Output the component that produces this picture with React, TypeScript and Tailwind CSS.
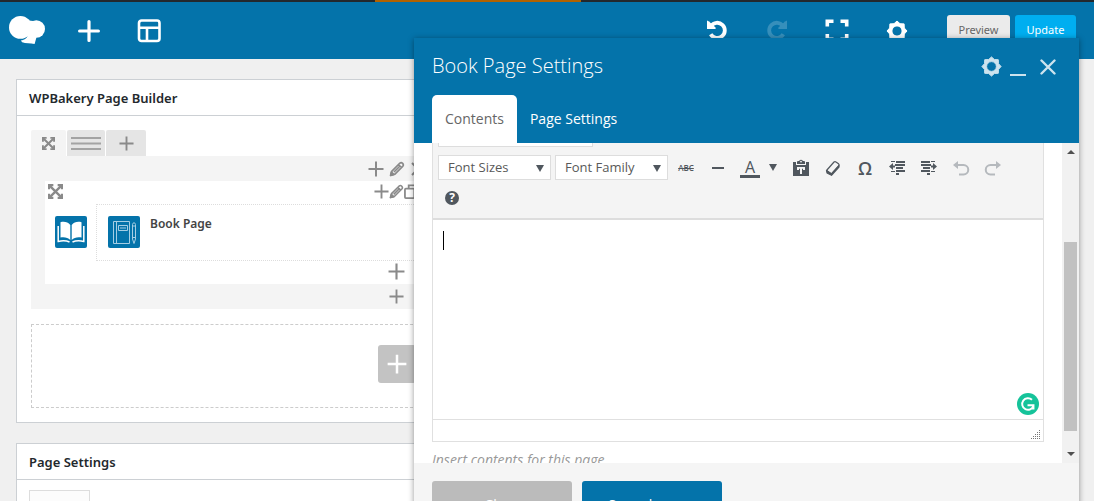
import { useState } from "react";
import type { ReactNode } from "react";

type IconProps = { className?: string };

function GearIcon({ className }: IconProps) {
  return (
    <svg viewBox="0 0 24 24" className={className} fill="currentColor" fillRule="evenodd" stroke="currentColor" strokeLinejoin="round">
      <path d="M22 12 19.300 15 19.100 19.100 15 19.300 12 22 9 19.300 4.900 19.100 4.700 15 2 12 4.700 9 4.900 4.900 9 4.700 12 2 15 4.700 19.100 4.900 19.300 9zM12 6.900a5.100 5.100 0 1 0 0 10.200 5.100 5.100 0 0 0 0-10.200z" />
    </svg>
  );
}

function UndoIcon({ className }: IconProps) {
  return (
    <svg viewBox="0 0 24 24" className={className} fill="none">
      <path d="M6 7A7.600 7.600 0 1 1 5.700 15.300" stroke="currentColor" strokeWidth="3.800" />
      <path d="M2 1.600 4 2.400 10.600 8.600V10H2z" fill="currentColor" />
    </svg>
  );
}

function FullscreenIcon({ className }: IconProps) {
  return (
    <svg viewBox="0 0 24 24" className={className} fill="none" stroke="currentColor" strokeWidth="3.600">
      <path d="M2.300 7.500V2.300H8.500M15.500 2.300h6.200V7.500M2.300 15v5.200h6.200M15.500 20.200h6.200V15" />
    </svg>
  );
}

function PlusIcon({ className }: IconProps) {
  return (
    <svg viewBox="0 0 16 16" className={className} stroke="currentColor" strokeWidth="2">
      <path d="M0.500 8h15M8 0.500v15" />
    </svg>
  );
}

function PencilIcon({ className }: IconProps) {
  return (
    <svg viewBox="0 0 16 16" className={className} fill="none" stroke="currentColor" strokeWidth="1.700" strokeLinejoin="round">
      <path d="M1.600 14.400 2.700 10.300 10.900 2.100Q12.300 1 13.600 2.400T13.900 5.100L5.700 13.300zM9.500 3.600l2.900 2.900M5 11 10.500 5.500" />
      <path d="M1.600 14.400 2.500 11 5 13.500z" fill="currentColor" />
    </svg>
  );
}

function CopyIcon({ className }: IconProps) {
  return (
    <svg viewBox="0 0 16 16" className={className} fill="none" stroke="currentColor" strokeWidth="1.900">
      <rect x="1" y="5" width="10" height="10" rx="1" />
      <path d="M5 5V1.500h9.500V11H11" />
    </svg>
  );
}

function MoveIcon({ className }: IconProps) {
  return (
    <svg viewBox="0 0 14 14" className={className} fill="none" stroke="currentColor" strokeWidth="2">
      <path d="M1 5V1H5M9 1h4V5M13 9v4H9M5 13H1V9" />
      <path d="M1 1l12 12M13 1L1 13" strokeWidth="2.200" />
    </svg>
  );
}

function ToolButton({ label, width = "w-8", children }: { label: string; width?: string; children: ReactNode }) {
  return (
    <button type="button" aria-label={label} className={`flex h-[25px] items-center justify-center ${width}`}>
      {children}
    </button>
  );
}

function ToolSelect({ label, width }: { label: string; width: string }) {
  return (
    <div className={`relative ${width}`}>
      <select aria-label={label || "Format"} className="block h-[25px] w-full appearance-none border border-[#ddd] bg-white pl-[9px] text-[13px] leading-[23px] text-[#595959]">
        <option>{label}</option>
      </select>
      <svg viewBox="0 0 8 7" className="pointer-events-none absolute top-[10px] right-[7px] h-[7px] w-2 fill-[#50575e]">
        <path d="M0 0h8L4 7z" />
      </svg>
    </div>
  );
}

function TopBar() {
  const navButton = "flex h-[57px] w-[60px] items-center justify-center";
  return (
    <header>
      <div className="flex h-[2px] bg-[#23282d]">
        <span className="ml-[375px] w-[206px] bg-[#b26200]" />
      </div>
      <div className="flex h-[57px] bg-[#0473aa] text-white">
        <a href="#" aria-label="WPBakery" className="flex w-[59px] items-center pb-[2px] pl-[9px]">
          <svg viewBox="0 0 36 28" className="h-7 w-9" fill="currentColor">
            <circle cx="11.400" cy="11.400" r="11.400" />
            <circle cx="27.300" cy="13" r="8.700" />
            <path d="M16 4 24 5 26 21.500 15 20z" />
            <path d="M11.800 24.600C16 23.800 18 22 20 18L27.500 21.300 25.600 28C21.500 26.800 16.500 27.800 13.200 26.300z" />
          </svg>
        </a>
        <button type="button" aria-label="Add element" className={navButton}>
          <svg viewBox="0 0 22 22" className="size-[22px]" stroke="currentColor" strokeWidth="3.200" strokeLinecap="round">
            <path d="M1.600 11h18.800M11 1.600v18.800" />
          </svg>
        </button>
        <button type="button" aria-label="Templates" className={navButton}>
          <svg viewBox="0 0 24 24" className="size-6" fill="none" stroke="currentColor" strokeWidth="2.600">
            <rect x="2" y="1.500" width="20.500" height="20.500" rx="2.500" />
            <path d="M2 8.800h20.500M10 8.800v13" />
          </svg>
        </button>
        <div className="ml-auto flex">
          <button type="button" aria-label="Undo" className={navButton}>
            <UndoIcon className="size-6" />
          </button>
          <button type="button" aria-label="Redo" className={navButton} disabled>
            <UndoIcon className="size-6 -scale-x-100 opacity-20" />
          </button>
          <button type="button" aria-label="Fullscreen" className={navButton}>
            <FullscreenIcon className="size-6" />
          </button>
          <button type="button" aria-label="Settings" className={navButton}>
            <GearIcon className="size-6" />
          </button>
        </div>
        <div className="mr-[18px] ml-5 flex items-center gap-[5px] text-[11px]">
          <button type="button" className="h-[31px] w-[63px] rounded-[3px] bg-[#ebebeb] text-[#666]">Preview</button>
          <button type="button" className="h-[31px] w-[61px] rounded-[3px] bg-[#00aef0] text-white">Update</button>
        </div>
      </div>
    </header>
  );
}

function PostBox({ title, children }: { title: string; children: ReactNode }) {
  return (
    <section className="border border-[#ccd0d4] bg-white">
      <h2 className="flex h-9 items-center border-b border-[#ccd0d4] pt-[2px] pl-3 text-[13px] font-semibold text-[#23282d]">{title}</h2>
      {children}
    </section>
  );
}

function BuilderRow() {
  const iconButton = "flex items-center justify-center";
  return (
    <div className="text-[#8a8a8a]">
      <div className="flex gap-px">
        <button type="button" aria-label="Move row" className="flex h-[26px] w-[35px] items-center justify-center rounded-t-[2px] bg-[#f4f4f4]">
          <MoveIcon className="size-[13px]" />
        </button>
        <button type="button" aria-label="Row layout" className="flex h-[26px] w-[38px] items-center justify-center rounded-t-[2px] bg-[#e5e5e5]">
          <svg viewBox="0 0 30 13" className="h-[13px] w-[30px]" stroke="#a3a3a3" strokeWidth="2">
            <path d="M0 1h30M0 6.500h30M0 12h30" />
          </svg>
        </button>
        <button type="button" aria-label="Add column" className="flex h-[26px] w-10 items-center justify-center rounded-t-[2px] bg-[#e5e5e5]">
          <PlusIcon className="size-[15px]" />
        </button>
      </div>

      <div className="bg-[#f4f4f4] px-[14px]">
        <div className="flex h-[25px] items-center justify-center gap-[5px]">
          <button type="button" aria-label="Add to column"><PlusIcon className="size-4" /></button>
          <button type="button" aria-label="Edit column"><PencilIcon className="size-4" /></button>
          <button type="button" aria-label="Delete column">
            <svg viewBox="0 0 16 16" className="size-4" stroke="currentColor" strokeWidth="2">
              <path d="M2 2l12 12M14 2L2 14" />
            </svg>
          </button>
        </div>

        <div className="bg-white">
          <div className="grid h-[23px] grid-cols-[1fr_auto_1fr] items-center px-[3px] pb-[3px]">
            <button type="button" aria-label="Move element" className="w-[15px]"><MoveIcon className="size-[15px]" /></button>
            <div className="flex">
              <button type="button" aria-label="Add"><PlusIcon className="size-[15px]" /></button>
              <button type="button" aria-label="Edit"><PencilIcon className="size-[15px]" /></button>
              <button type="button" aria-label="Clone"><CopyIcon className="size-[15px]" /></button>
            </div>
          </div>
          <div className="flex gap-[9px] pr-3 pl-[10px]">
            <svg viewBox="0 0 32 32" className="mt-3 size-8">
              <rect width="32" height="32" rx="2" fill="#0473aa" />
              <path d="M15.300 9C13 6 9 5.300 5.500 6.300V21.500C9.500 20.900 13 21.500 15.300 24zM16.700 9C19 6 23 5.300 26.500 6.300V21.500C22.500 20.900 19 21.500 16.700 24z" fill="#fff" />
              <path d="M3.200 10V25.400C7.500 24.300 11.500 24.600 14.500 26M28.800 10V25.400C24.500 24.300 20.500 24.600 17.500 26" fill="none" stroke="#fff" strokeWidth="1.500" />
            </svg>
            <div className="flex h-[57px] flex-1 gap-[10px] border border-dotted border-[#ddd] pl-[11px]">
              <svg viewBox="0 0 32 32" className="mt-[11px] size-8" fill="none" stroke="#a5cee4" strokeWidth="1">
                <rect width="32" height="32" rx="2" fill="#0473aa" stroke="none" />
                <path d="M5.500 5.500H21.500V27.500H5.500zM8.500 5.500v22M10.500 9.500h9v5h-9zM12 12h6M24.500 8.500q1.500-4 3 0V23L26 27.500 24.500 23zM24.500 10h3M24.500 21.500h3" />
              </svg>
              <h4 className="mt-[9px] text-[12px] leading-5 font-semibold text-[#444]">Book Page</h4>
            </div>
          </div>
          <button type="button" aria-label="Append element" className={`h-[23px] w-full pb-[3px] ${iconButton}`}>
            <PlusIcon className="size-[17px]" />
          </button>
        </div>

        <button type="button" aria-label="Append to column" className={`h-[25px] w-full ${iconButton}`}>
          <PlusIcon className="size-[15px]" />
        </button>
      </div>
    </div>
  );
}

function SettingsDialog() {
  const [tab, setTab] = useState("Contents");
  const [content, setContent] = useState("");

  return (
    <div role="dialog" aria-label="Book Page Settings" className="absolute top-[38px] right-[15px] left-[414px] bg-[#f5f5f5] font-['Open_Sans',sans-serif] shadow-[0_1px_6px_rgba(0,0,0,0.4)]">
      {/* HEADER */}
      <div className="bg-[#0473aa] px-[18px] text-white">
        <div className="flex h-[57px] items-center">
          <h3 className="pb-[2px] text-[20px] leading-7 font-light">Book Page Settings</h3>
          <div className="ml-auto flex items-center text-[#cde3ee]">
            <button type="button" aria-label="Settings" className="flex w-5 justify-center"><GearIcon className="size-[23px] shrink-0" /></button>
            <button type="button" aria-label="Minimize" className="flex h-5 w-[34px] items-end justify-center pb-px"><span className="h-[2px] w-4 bg-current" /></button>
            <button type="button" aria-label="Close dialog" className="flex w-[26px] justify-center">
              <svg viewBox="0 0 16 16" className="size-4" stroke="currentColor" strokeWidth="2.400" strokeLinecap="round">
                <path d="M1.500 1.500l13 13M14.500 1.500l-13 13" />
              </svg>
            </button>
          </div>
        </div>
        <div className="flex text-[14px]">
          {["Contents", "Page Settings"].map((name) => (
            <button
              key={name}
              type="button"
              onClick={() => setTab(name)}
              className={tab === name ? "h-12 rounded-t-[5px] bg-white px-[13px] pb-[2px] text-[#666]" : "h-12 px-[13px] pb-[2px] font-medium text-white"}
            >
              {name}
            </button>
          ))}
        </div>
      </div>

      {/* SCROLLED BODY */}
      <div className="flex h-[320px] overflow-hidden bg-white">
        <div className="-mt-7 flex-1 px-[18px]">
          <div className="border border-[#e0e0e0]">
            <div className="flex flex-col gap-2 border-b-2 border-[#ddd] bg-[#f4f4f4] px-[5px] pt-[6px] pb-2 text-[#50575e]">
              <div className="flex">
                <ToolSelect label="" width="w-[155px]" />
              </div>
              <div className="flex items-center">
                <ToolSelect label="Font Sizes" width="w-[113px]" />
                <div className="ml-1">
                  <ToolSelect label="Font Family" width="w-[113px]" />
                </div>
                <div className="ml-[2px] flex">
                  <ToolButton label="Strikethrough"><span className="text-[8px] font-semibold line-through">ABC</span></ToolButton>
                  <ToolButton label="Horizontal line"><span className="h-[2px] w-3 bg-current" /></ToolButton>
                  <ToolButton label="Text color">
                    <span className="flex h-[21px] w-5 justify-center border-b-[3px] border-current pt-[2px] text-[16px] leading-4">A</span>
                  </ToolButton>
                  <ToolButton label="Pick color" width="w-[14px]">
                    <svg viewBox="0 0 8 7" className="h-[7px] w-2 fill-current"><path d="M0 0h8L4 7z" /></svg>
                  </ToolButton>
                  <div className="ml-[5px] flex">
                    <ToolButton label="Paste as text">
                      <svg viewBox="0 0 18 18" className="size-[18px]" fill="currentColor" fillRule="evenodd">
                        <path d="M5 3q0-1 1-1h1q2-2.500 4 0h1q1 0 1 1v2H5zM1 3h3v3h10V3h3v14H1zM5 8v3h2v-1.200h1V15h2V9.800h1V11h2V8z" />
                        <circle cx="9" cy="2.600" r="0.900" fill="#f4f4f4" />
                      </svg>
                    </ToolButton>
                    <ToolButton label="Clear formatting">
                      <svg viewBox="0 0 16 16" className="size-4" fill="none" stroke="currentColor" strokeWidth="1.200" strokeLinejoin="round">
                        <path d="M1.500 10.500 9 2q1-.9 2 0l2.500 1.800q1 .9.300 2L6.500 14z" />
                        <path d="M1.500 10.500 6.500 14 14 5.500V7L6.500 15.300 2 13z" fill="currentColor" />
                      </svg>
                    </ToolButton>
                    <ToolButton label="Special character"><span className="text-[18px] leading-5 font-semibold">Ω</span></ToolButton>
                    <ToolButton label="Decrease indent">
                      <svg viewBox="0 0 16 14" className="h-[14px] w-4" fill="currentColor">
                        <path d="M2 0h4v1H2zM7 0h9v2H7zM6 3h10v2H6zM7 6h7v2H7zM7 9h9v2H7zM2 10h4v1H2zM7 12h3v2H7zM0 5.500 4 2v2.500h2v2H4V9z" />
                      </svg>
                    </ToolButton>
                    <ToolButton label="Increase indent">
                      <svg viewBox="0 0 16 14" className="h-[14px] w-4" fill="currentColor">
                        <path d="M10 0h4v1h-4zM0 0h9v2H0zM0 3h10v2H0zM2 6h7v2H2zM0 9h9v2H0zM10 10h4v1h-4zM6 12h3v2H6zM16 5.500 12 2v2.500h-2v2h2V9z" />
                      </svg>
                    </ToolButton>
                    <ToolButton label="Undo edit">
                      <svg viewBox="0 0 18 16" className="h-4 w-[18px]" fill="none" stroke="#b5b9bd" strokeWidth="2">
                        <path d="M4 5h7.500a4.700 4.700 0 0 1 0 9.500H7" />
                        <path d="M6 1v8L1 5z" fill="#b5b9bd" stroke="none" />
                      </svg>
                    </ToolButton>
                    <ToolButton label="Redo edit">
                      <svg viewBox="0 0 18 16" className="h-4 w-[18px] -scale-x-100" fill="none" stroke="#b5b9bd" strokeWidth="2">
                        <path d="M4 5h7.500a4.700 4.700 0 0 1 0 9.500H7" />
                        <path d="M6 1v8L1 5z" fill="#b5b9bd" stroke="none" />
                      </svg>
                    </ToolButton>
                  </div>
                </div>
              </div>
              <div className="-mt-[3px] flex">
                <ToolButton label="Keyboard shortcuts" width="w-7">
                  <span className="flex size-[14px] items-center justify-center rounded-full bg-[#50575e] text-[12px] leading-[14px] font-bold text-white">?</span>
                </ToolButton>
              </div>
            </div>

            <div className="relative">
              <textarea
                aria-label="Page contents"
                value={content}
                onChange={(e) => setContent(e.target.value)}
                className="block h-[199px] w-full resize-none bg-white p-[10px] text-[13px] caret-transparent outline-none"
              />
              <span className="absolute top-[11px] left-[10px] h-[19px] w-px bg-black" />
              <svg viewBox="0 0 22 22" className="absolute right-1 bottom-1 size-[22px]" fill="none">
                <circle cx="11" cy="11" r="11" fill="#15c39a" />
                <path d="M15 6.800A5.800 5.800 0 1 0 16.500 12.800M10.500 12.300H16.500V16.500" stroke="#fff" strokeWidth="1.900" />
              </svg>
            </div>
            <div className="flex h-[22px] items-end justify-end border-t border-[#e0e0e0] pr-[2px] pb-[2px]">
              <svg viewBox="0 0 10 10" className="size-[10px]" stroke="#777" strokeWidth="1" strokeDasharray="1 1">
                <path d="M0 9.500h10M2 7.500h8M4 5.500h6M6 3.500h4M8 1.500h2" />
              </svg>
            </div>
          </div>
          <p className="mt-2 text-[14px] leading-5 text-[#999] italic">Insert contents for this page</p>
        </div>

        <div className="flex w-[17px] flex-col items-center bg-[#f1f1f1] py-[7px]">
          <svg viewBox="0 0 8 4" className="h-1 w-2 fill-[#505050]"><path d="M4 0l4 4H0z" /></svg>
          <span className="mt-[88px] h-[189px] w-[13px] bg-[#c1c1c1]" />
          <svg viewBox="0 0 8 4" className="mt-auto h-1 w-2 fill-[#505050]"><path d="M0 0h8L4 4z" /></svg>
        </div>
      </div>

      {/* FOOTER */}
      <div className="flex gap-[10px] p-[18px] text-[14px] text-white">
        <button type="button" className="h-[46px] w-[140px] rounded-[3px] bg-[#bbb]">Close</button>
        <button type="button" className="h-[46px] w-[140px] rounded-[3px] bg-[#0473aa]">Save changes</button>
      </div>
    </div>
  );
}

export default function App() {
  return (
    <div className="relative h-screen overflow-hidden bg-[#f0f0f0] font-['Noto_Sans','Open_Sans',sans-serif]">
      <TopBar />

      <main className="flex gap-5 pt-5 pr-[17px] pl-4">
        <div className="flex flex-1 flex-col gap-5">
          <PostBox title="WPBakery Page Builder">
            <div className="flex flex-col gap-[15px] p-[14px]">
              <BuilderRow />
              <div className="flex h-[84px] items-center justify-center border border-dashed border-[#ccc] pb-1">
                <button type="button" aria-label="Add new element" className="flex size-[38px] items-center justify-center rounded-[3px] bg-[#c3c3c3] text-white">
                  <PlusIcon className="size-5" />
                </button>
              </div>
            </div>
          </PostBox>

          <PostBox title="Page Settings">
            <div className="px-3 py-[10px]">
              <input aria-label="Page order" className="block h-7 w-[61px] border border-[#ddd] bg-[#fcfcfc]" />
            </div>
          </PostBox>
        </div>
        <aside className="w-[280px]" />
      </main>

      <SettingsDialog />
    </div>
  );
}
